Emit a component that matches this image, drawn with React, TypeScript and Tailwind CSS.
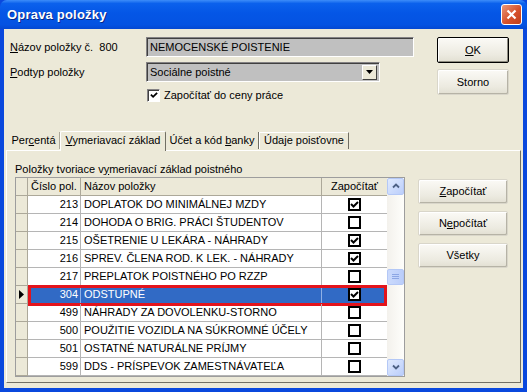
import React from 'react';

interface Row {
  code: number;
  name: string;
  on: boolean;
}

const rows: Row[] = [
  { code: 213, name: 'DOPLATOK DO MINIMÁLNEJ MZDY', on: true },
  { code: 214, name: 'DOHODA O BRIG. PRÁCI ŠTUDENTOV', on: false },
  { code: 215, name: 'OŠETRENIE U LEKÁRA - NÁHRADY', on: true },
  { code: 216, name: 'SPREV. ČLENA ROD. K LEK. - NÁHRADY', on: true },
  { code: 217, name: 'PREPLATOK POISTNÉHO PO RZZP', on: false },
  { code: 304, name: 'ODSTUPNÉ', on: true },
  { code: 499, name: 'NÁHRADY ZA DOVOLENKU-STORNO', on: false },
  { code: 500, name: 'POUŽITIE VOZIDLA NA SÚKROMNÉ ÚČELY', on: false },
  { code: 501, name: 'OSTATNÉ NATURÁLNE PRÍJMY', on: false },
  { code: 599, name: 'DDS - PRÍSPEVOK ZAMESTNÁVATEĽA', on: false },
];

const SELECTED = 304;

const Tick = ({ size = 9 }: { size?: number }) => (
  <svg width={size} height={size} viewBox="0 0 9 9">
    <path d="M1 4 L3.5 6.5 L8 2" fill="none" stroke="#000" strokeWidth="2" />
  </svg>
);

// grid cell checkbox: thick black square
const GridCheck = ({ on }: { on: boolean }) => (
  <div className="w-[13px] h-[13px] border-2 border-black bg-white flex items-center justify-center">
    {on && <Tick size={9} />}
  </div>
);

const Btn = ({ children, isDefault, className }: { children: React.ReactNode; isDefault?: boolean; className?: string }) => (
  <button
    className={
      'flex items-center justify-center bg-[linear-gradient(to_bottom,#FBFAF6,#ECEAE0_70%,#E2DFD2)] rounded-[2px] ' +
      (isDefault
        ? 'border border-black shadow-[inset_1px_1px_0_#fff,inset_-1px_-1px_0_#8E8C80] '
        : 'border border-[#D9D6CA] shadow-[inset_1px_1px_0_#fff,inset_-1px_-1px_0_#B6B3A6] ') +
      (className ?? '')
    }
  >
    {children}
  </button>
);

const ScrollBtn = ({ up }: { up?: boolean }) => (
  <div className="h-[17px] w-[17px] rounded-[2px] border border-[#B4C8F6] bg-[linear-gradient(to_bottom_right,#E0EAFE,#BBCEFB)] flex items-center justify-center">
    <svg width="8" height="6" viewBox="0 0 8 6">
      <path d={up ? 'M1 4.5 L4 1.5 L7 4.5' : 'M1 1.5 L4 4.5 L7 1.5'} fill="none" stroke="#4D6185" strokeWidth="1.8" />
    </svg>
  </div>
);

export default function App() {
  return (
    <div className="w-[527px] h-[392px] flex flex-col font-['Liberation_Sans',Arial,sans-serif] text-[11px] text-black bg-[#0A48DD]">
      {/* Title bar */}
      <div className="h-[29px] shrink-0 rounded-t-[7px] flex items-center pl-[7px] bg-[linear-gradient(to_bottom,#3D8DF9_0%,#0B61EC_12%,#0456E6_45%,#0453E2_85%,#0448D2_100%)]">
        <span className="text-white font-bold text-[13px] tracking-[0.2px] [text-shadow:1px_1px_0_#0A2A8A]">Oprava položky</span>
        <div className="ml-auto mr-[5px] w-[21px] h-[21px] rounded-[3px] border border-white bg-[linear-gradient(to_bottom_right,#E9987A,#D6512C_55%,#C03E19)] flex items-center justify-center">
          <svg width="11" height="11" viewBox="0 0 11 11">
            <path d="M1.5 1.5 L9.5 9.5 M9.5 1.5 L1.5 9.5" stroke="#fff" strokeWidth="2.2" />
          </svg>
        </div>
      </div>

      {/* Client area */}
      <div className="flex-1 flex flex-col mx-[4px] mb-[4px] bg-[#ECE9D8]">
        {/* Top fields */}
        <div className="flex pt-[8px]">
          <div className="w-[142px] pl-[6px] flex flex-col gap-[5px]">
            <div className="h-[20px] flex items-center">
              <span><u>N</u>ázov položky č.&nbsp;&nbsp;800</span>
            </div>
            <div className="h-[20px] flex items-center">
              <span><u>P</u>odtyp položky</span>
            </div>
          </div>
          <div className="flex flex-col">
            <div className="w-[268px] h-[20px] bg-[#C0C0C0] border border-t-[#848284] border-l-[#848284] border-b-white border-r-white shadow-[inset_1px_1px_0_#404040] flex items-center pl-[3px]">
              NEMOCENSKÉ POISTENIE
            </div>
            <div className="mt-[5px] w-[234px] h-[20px] bg-[#C0C0C0] border border-t-[#848284] border-l-[#848284] border-b-white border-r-white shadow-[inset_1px_1px_0_#404040] flex items-center pl-[3px] pr-[2px]">
              <span className="flex-1">Sociálne poistné</span>
              <div className="w-[15px] h-[15px] bg-[#ECE9D8] border border-t-white border-l-white border-b-[#404040] border-r-[#404040] flex items-center justify-center">
                <svg width="7" height="4" viewBox="0 0 7 4">
                  <path d="M0 0 H7 L3.5 4 Z" fill="#000" />
                </svg>
              </div>
            </div>
            <div className="mt-[5px] flex items-center gap-[4px] pl-[1px]">
              <div className="w-[13px] h-[13px] bg-white border border-t-[#848284] border-l-[#848284] border-b-white border-r-white shadow-[inset_1px_1px_0_#404040] flex items-center justify-center">
                <Tick size={8} />
              </div>
              <span>Započítať do ceny práce</span>
            </div>
          </div>
          <div className="ml-[23px] flex flex-col gap-[6px]">
            <Btn isDefault className="w-[72px] h-[26px]">
              <span><u>O</u>K</span>
            </Btn>
            <Btn className="w-[72px] h-[26px]">Storno</Btn>
          </div>
        </div>

        {/* Tabs */}
        <div className="mt-[27px] flex items-end pl-[4px] relative z-10">
          <div className="w-[52px] h-[17px] flex items-center justify-center border-r border-[#ACA899] mb-px">
            <span>Per<u>c</u>entá</span>
          </div>
          <div className="w-[106px] h-[20px] -mb-px flex items-center justify-center bg-[#ECE9D8] border-t border-l border-white border-r border-r-[#716F64] rounded-t-[2px] pb-[2px]">
            <span><u>V</u>ymeriavací základ</span>
          </div>
          <div className="w-[93px] h-[17px] flex items-center justify-center border-r border-[#716F64] mb-px">
            <span>Účet a kód <u>b</u>anky</span>
          </div>
          <div className="w-[90px] h-[17px] flex items-center justify-center border-r border-l border-l-white border-r-[#716F64] border-t border-t-white mb-px">
            <span>Údaje poisťovne</span>
          </div>
        </div>

        {/* Tab panel */}
        <div className="flex-1 mx-[2px] mb-[5px] border border-t-white border-l-white border-b-[#716F64] border-r-[#716F64] flex flex-col">
          <div className="pl-[8px] pt-[12px] h-[26px] leading-[13px]">
            Položky tvoriace v<u>y</u>meriavací základ poistného
          </div>
          <div className="flex pl-[8px]">
            {/* Grid */}
            <div className="flex border border-[#9D9D9D] bg-white">
              <div className="flex flex-col w-[371px]">
                <div className="grid grid-cols-[12px_53px_241px_65px] h-[18px] bg-[#ECE9D8]">
                  <div className="border-r border-b border-[#ACA899]" />
                  <div className="border-r border-b border-[#ACA899] pl-[3px] flex items-center">Číslo pol.</div>
                  <div className="border-r border-b border-[#ACA899] pl-[3px] flex items-center">Názov položky</div>
                  <div className="border-b border-[#ACA899] flex items-center justify-center">Započítať</div>
                </div>
                {rows.map((r) => {
                  const sel = r.code === SELECTED;
                  return (
                    <div key={r.code} className="relative grid grid-cols-[12px_53px_241px_65px] h-[18px]">
                      <div className="bg-[#ECE9D8] border-r border-b border-[#ACA899] flex items-center justify-center">
                        {sel && (
                          <svg width="5" height="9" viewBox="0 0 5 9">
                            <path d="M0 0 L5 4.5 L0 9 Z" fill="#000" />
                          </svg>
                        )}
                      </div>
                      <div
                        className={
                          'border-r border-b flex items-center justify-end pr-[2px] ' +
                          (sel ? 'bg-[#316AC5] text-white border-[#8FB0E6]' : 'border-[#B5B5B5]')
                        }
                      >
                        {r.code}
                      </div>
                      <div
                        className={
                          'border-r border-b flex items-center pl-[3px] whitespace-nowrap overflow-hidden ' +
                          (sel ? 'bg-[#316AC5] text-white border-[#8FB0E6]' : 'border-[#B5B5B5]')
                        }
                      >
                        {r.name}
                      </div>
                      <div
                        className={
                          'border-b flex items-center justify-center ' +
                          (sel ? 'bg-[#316AC5] border-[#8FB0E6]' : 'border-[#B5B5B5]')
                        }
                      >
                        <GridCheck on={r.on} />
                      </div>
                      {sel && (
                        <div className="absolute left-[12px] right-0 -top-[1px] -bottom-[2px] border-[3px] border-[#E3141C] pointer-events-none" />
                      )}
                    </div>
                  );
                })}
              </div>
              {/* Scrollbar */}
              <div className="w-[17px] flex flex-col bg-[linear-gradient(to_right,#F3F1EC,#FEFEFB)]">
                <ScrollBtn up />
                <div className="flex-1 flex flex-col">
                  <div className="mt-[74px] h-[16px] w-[17px] rounded-[2px] border border-[#B4C8F6] bg-[linear-gradient(to_right,#CBDAFC,#BACDFA)] flex flex-col items-center justify-center gap-[1px]">
                    <div className="w-[7px] h-px bg-[#8CA6E4]" />
                    <div className="w-[7px] h-px bg-[#8CA6E4]" />
                    <div className="w-[7px] h-px bg-[#8CA6E4]" />
                  </div>
                </div>
                <ScrollBtn />
              </div>
            </div>

            {/* Side buttons */}
            <div className="ml-[13px] pt-[2px] flex flex-col gap-[7px]">
              <Btn className="w-[90px] h-[25px]">
                <span><u>Z</u>apočítať</span>
              </Btn>
              <Btn className="w-[90px] h-[25px]">
                <span>N<u>e</u>počítať</span>
              </Btn>
              <Btn className="w-[90px] h-[25px]">Všetky</Btn>
            </div>
          </div>
        </div>
      </div>
    </div>
  );
}
